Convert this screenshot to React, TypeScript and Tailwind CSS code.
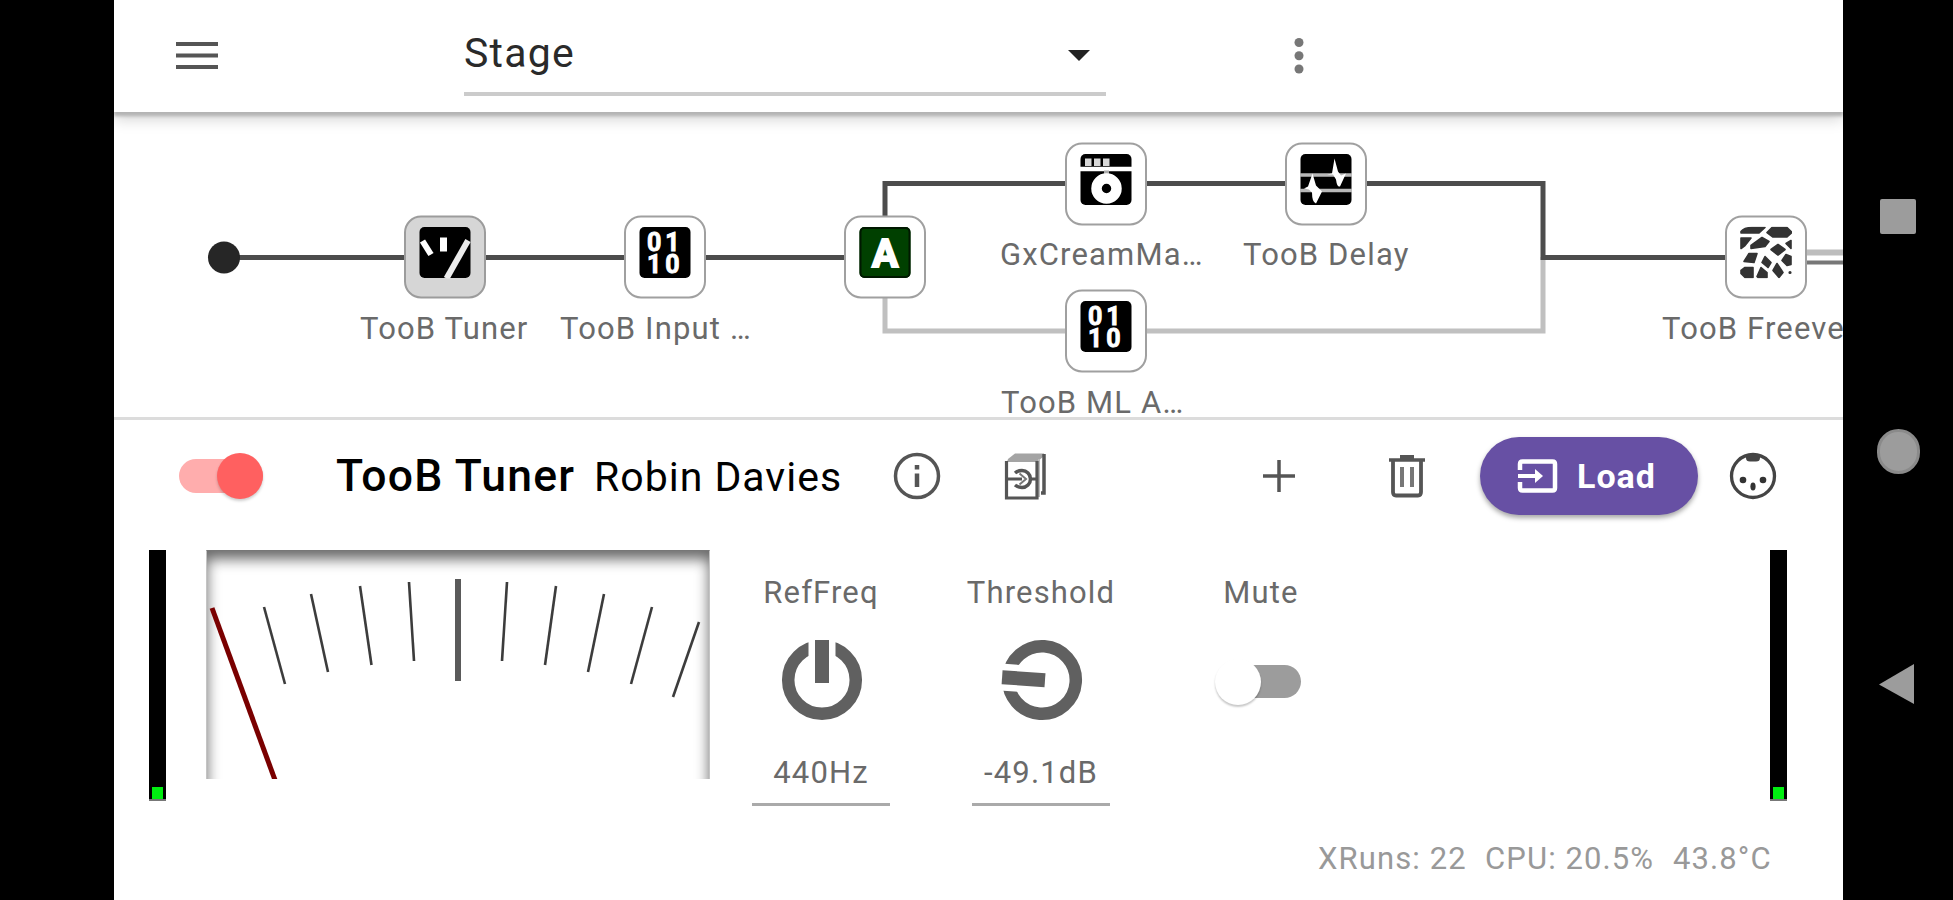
import React from 'react';

type NodeIcon = 'tuner' | 'binary' | 'split' | 'amp' | 'delay' | 'reverb';

interface PluginNode {
  id: string;
  icon: NodeIcon;
  label?: string;
  x: number;
  y: number;
  labelX?: number;
  selected?: boolean;
}

// x/y are the centre of each tile on the pedalboard canvas
const nodes: PluginNode[] = [
  { id: 'tuner', icon: 'tuner', label: 'TooB Tuner', x: 331, y: 145, labelX: 246, selected: true },
  { id: 'input', icon: 'binary', label: 'TooB Input …', x: 551, y: 145, labelX: 446 },
  { id: 'split', icon: 'split', x: 771, y: 145 },
  { id: 'cream', icon: 'amp', label: 'GxCreamMa…', x: 992, y: 71.5, labelX: 886 },
  { id: 'delay', icon: 'delay', label: 'TooB Delay', x: 1212, y: 71.5, labelX: 1129 },
  { id: 'ml', icon: 'binary', label: 'TooB ML A…', x: 992, y: 219, labelX: 887 },
  { id: 'freeverb', icon: 'reverb', label: 'TooB Freeverb', x: 1652, y: 145, labelX: 1548 },
];

const TileIcon: React.FC<{ icon: NodeIcon }> = ({ icon }) => {
  const base = icon === 'split' ? '#004000' : '#000';
  return (
    <svg width="52" height="52" viewBox="0 0 52 52" className="block">
      {icon !== 'reverb' && <rect x="0.5" y="0.5" width="51" height="51" rx="5" fill={base} />}
      {icon === 'split' && (
        <>
          <rect x="1.5" y="1.5" width="49" height="49" rx="4" fill="none" stroke="#001800" strokeWidth="2" />
          <text x="26" y="40" textAnchor="middle" fill="#fff" stroke="#fff" strokeWidth="2" className="font-['Roboto',sans-serif] text-[39px] font-bold">A</text>
        </>
      )}
      {icon === 'tuner' && (
        <g stroke="#fff" fill="none">
          <path d="M3.5 14.5 12 28" strokeWidth="6" />
          <path d="M24.5 11V25" strokeWidth="7" />
          <path d="M49 14 27.5 52" strokeWidth="6" stroke="#ececec" />
        </g>
      )}
      {icon === 'binary' && (
        <g fill="#fff" stroke="#fff" strokeWidth="0.9" className="font-['Roboto',sans-serif] text-[25px] font-bold tracking-[4px]">
          <text x="8" y="24">01</text>
          <text x="8" y="46.5">10</text>
        </g>
      )}
      {icon === 'amp' && (
        <g>
          <path d="M0 15.5H52" stroke="#fff" strokeWidth="4.5" />
          <rect x="5" y="5" width="6.5" height="7.5" fill="#d8d8d8" />
          <rect x="14" y="5" width="6.5" height="7.5" fill="#d8d8d8" />
          <rect x="23" y="5" width="6.5" height="7.5" fill="#d8d8d8" />
          <path d="M26.5 17V24" stroke="#aaa" strokeWidth="5" />
          <circle cx="26.5" cy="35" r="10" fill="none" stroke="#fff" strokeWidth="10.5" />
        </g>
      )}
      {icon === 'delay' && (
        <g>
          <path d="M0 21.5H52M0 37H52" stroke="#b8b8b8" strokeWidth="3.6" />
          <path d="M27 21 32 20 34.5 5 38 18 41 22 46 20 40 33Q37 34 36 26L33 21Z" fill="#fff" />
          <path d="M4 35 8 33 12.5 20 16 32 22 38 16 50Q12 49 12 39L9 36Z" fill="#fff" />
        </g>
      )}
      {icon === 'reverb' && (
        <g fill="#333" stroke="#333" strokeWidth="1.6" strokeLinejoin="round">
          <path d="M1 5Q4 1 12 1H25L19 6.5H1Z" />
          <path d="M27 6 32 1H47L52 6 47 10.5H33Z" />
          <path d="M1 11.5H11L5 19 1 22Z" />
          <path d="M11 19 22 11 29 15 25 20 11 22Z" />
          <path d="M46 17 51 14V22Z" />
          <path d="M31 23 38 18 45 23 38 28.5Z" />
          <path d="M4 35 9 27H17L14 36Z" />
          <path d="M22 36 25 30 31 36 28 41Z" />
          <path d="M42 34 46 28 51 30V38L47 39Z" />
          <path d="M1 44 5 41H13V51H5L1 47Z" />
          <path d="M17 50 21 41 27 46V51H18Z" />
          <path d="M33 44 37 37 43 46 39 51Z" />
          <circle cx="50" cy="46" r="0.8" />
        </g>
      )}
    </svg>
  );
};

const Tile: React.FC<{ node: PluginNode }> = ({ node }) => (
  <>
    <div
      className={`absolute flex h-[83px] w-[82px] -translate-x-1/2 -translate-y-1/2 justify-center rounded-[17px] border-[2.5px] pt-[9px] ${
        node.selected ? 'border-[#9c9c9c] bg-[#d6d6d6]' : 'border-[#a0a0a0] bg-white'
      }`}
      style={{ left: node.x, top: node.y }}
    >
      <TileIcon icon={node.icon} />
    </div>
    {node.label && (
      <span
        className="absolute text-[31px] leading-[36px] tracking-[1.15px] whitespace-nowrap text-[#6a6a6a]"
        style={{ left: node.labelX, top: node.y + 53.5 }}
      >
        {node.label}
      </span>
    )}
  </>
);

const Pedalboard: React.FC = () => (
  <section className="relative h-[305px] overflow-hidden">
    <svg width="1729" height="305" className="block" fill="none">
      <path d="M771 145V219H1429V145" stroke="#c0c0c0" strokeWidth="5" />
      <path d="M110 145.5H771V71.5H1429V145.5H1652" stroke="#4c4c4c" strokeWidth="5" />
      <path d="M1652 140.5H1729" stroke="#bdbdbd" strokeWidth="6" />
      <path d="M1652 150.5H1729" stroke="#777" strokeWidth="4" />
      <circle cx="110" cy="145.5" r="16" fill="#262626" />
    </svg>
    {nodes.map((node) => (
      <Tile key={node.id} node={node} />
    ))}
  </section>
);

const Header: React.FC = () => (
  <header className="relative z-10 flex h-[112px] bg-white shadow-[0_4px_3px_#b4b4b4,0_7px_14px_rgba(0,0,0,0.18)]">
    <svg width="42" height="29" className="mt-[41px] ml-[62px]" stroke="#555" strokeWidth="4">
      <path d="M0 3H42M0 14.5H42M0 26H42" />
    </svg>
    <div className="mt-[29px] ml-[246px] flex h-[67px] w-[642px] justify-between border-b-4 border-[#cbcbcb]">
      <span className="text-[41px] leading-[48px] tracking-[1.2px] text-[#2a2a2a]">Stage</span>
      <svg width="22" height="11" className="mt-[21px] mr-[16px]">
        <path d="M0 0H22L11 11Z" fill="#222" />
      </svg>
    </div>
    <svg width="10" height="38" className="mt-[37px] ml-[188px]" fill="#777">
      <circle cx="5" cy="5.5" r="4.5" />
      <circle cx="5" cy="18.7" r="4.5" />
      <circle cx="5" cy="32" r="4.5" />
    </svg>
  </header>
);

const PluginToolbar: React.FC = () => (
  <div className="flex h-[112px] items-center">
    <div className="ml-[65px] flex h-[34px] w-[84px] items-center justify-end rounded-full bg-[#ffadad]">
      <div className="h-[46px] w-[46px] shrink-0 rounded-full bg-[#ff6060] shadow-[0_2px_3px_rgba(0,0,0,0.2)]" />
    </div>
    <div className="ml-[73px] flex w-[540px] items-baseline whitespace-nowrap text-black">
      <span className="w-[258px] text-[44.5px] leading-[48px] font-medium tracking-[1.2px]">TooB Tuner</span>
      <span className="text-[41px] leading-[48px] tracking-[1px]">Robin Davies</span>
    </div>
    <svg width="48" height="48" viewBox="0 0 48 48" className="ml-[17px]" fill="none" stroke="#555">
      <circle cx="24" cy="24" r="21.5" strokeWidth="3.5" />
      <path d="M24 21.5V35M24 13V17.5" strokeWidth="4.5" />
    </svg>
    <svg width="44" height="50" viewBox="0 0 44 50" className="ml-[63px]" fill="none" stroke="#555">
      <path d="M4 8 11 2.5H40V5L33 11H3Z" fill="#a4a4a4" stroke="none" />
      <path d="M40 3V42H37" strokeWidth="3.5" />
      <path d="M35 8V46" strokeWidth="2" stroke="#bbb" />
      <path d="M2.5 10V47H33V10" strokeWidth="3.2" />
      <path d="M2 28H18M26 28H33" strokeWidth="3" />
      <path d="M11 22Q14 19.5 18 19.5A8.5 8.5 0 0 1 18 36.5Q14 36.5 11 34" strokeWidth="3.5" />
      <path d="M15.5 22.5 22 28 15.5 33.5" strokeWidth="2" stroke="#777" />
    </svg>
    <svg width="32" height="32" className="ml-[215px]" stroke="#555" strokeWidth="3.5">
      <path d="M0 16H32M16 0V32" />
    </svg>
    <svg width="38" height="44" viewBox="0 0 38 44" className="ml-[93px]" fill="none" stroke="#555">
      <path d="M1 6H37" strokeWidth="3.5" />
      <path d="M12 3H26" strokeWidth="4" />
      <path d="M5 6V38Q5 41.5 8 41.5H30Q33 41.5 33 38V6" strokeWidth="3.8" />
      <path d="M14 13V33M24 13V33" strokeWidth="4" stroke="#777" />
    </svg>
    <button className="ml-[54px] flex h-[78px] w-[218px] items-center rounded-full bg-[#6750a4] pl-[37px] shadow-[0_3px_5px_rgba(0,0,0,0.35)]">
      <svg width="41" height="36" viewBox="0 0 41 36" fill="none" stroke="#fff">
        <path d="M3 12V6Q3 3.5 5.5 3.5H35.5Q38 3.5 38 6V30Q38 32.5 35.5 32.5H5.5Q3 32.5 3 30V24" strokeWidth="4.5" />
        <path d="M1 18H21" strokeWidth="4" />
        <path d="M18 11 26 18 18 25Z" fill="#fff" stroke="none" />
      </svg>
      <span className="ml-[19px] text-[34px] leading-[40px] font-bold tracking-[1px] text-white">Load</span>
    </button>
    <svg width="48" height="48" viewBox="0 0 48 48" className="ml-[31px]" fill="none" stroke="#444">
      <circle cx="24" cy="24" r="21.5" strokeWidth="3.3" />
      <path d="M17 3H31V6Q31 9.5 27 9.5H21Q17 9.5 17 6Z" fill="#444" stroke="none" />
      <g fill="#333" stroke="none">
        <circle cx="14" cy="28" r="3.3" />
        <circle cx="34" cy="28" r="3.3" />
        <ellipse cx="24" cy="34.5" rx="2.6" ry="4" />
      </g>
    </svg>
  </div>
);

const LevelMeter: React.FC = () => (
  <div className="flex h-[251px] w-[17px] flex-col justify-end border-b-2 border-[#777] bg-black px-[3px]">
    <div className="h-[12px] bg-[#00ee10]" />
  </div>
);

// tick endpoints on the dial, left to right
const ticks = [
  [57, 56, 78, 133],
  [104, 43, 121, 121],
  [153, 35, 164.5, 114],
  [202, 31, 207, 110],
  [300, 31, 295, 110],
  [349, 35, 338, 114],
  [397, 43, 381, 121],
  [445, 56, 424, 133],
  [492, 71, 466, 146],
];

const TunerDial: React.FC = () => (
  <div className="ml-[40px] h-[229px] w-[504px] overflow-hidden">
    <div className="h-[260px] border border-[#c4c4c4] border-t-[#777] shadow-[inset_0_8px_14px_rgba(0,0,0,0.6)]">
      <svg width="502" height="229" fill="none" stroke="#3c3c3c" strokeWidth="2.6">
        {ticks.map(([x1, y1, x2, y2]) => (
          <line key={x1} x1={x1} y1={y1} x2={x2} y2={y2} />
        ))}
        <path d="M251 28V130" stroke="#5a5a5a" strokeWidth="6" />
        <path d="M5 57 68 229" stroke="#7a0000" strokeWidth="5" />
      </svg>
    </div>
  </div>
);

interface KnobProps {
  name: string;
  value: string;
  angle: number;
}

const Knob: React.FC<KnobProps> = ({ name, value, angle }) => (
  <div className="flex w-[220px] flex-col items-center text-[31px] leading-[36px] tracking-[1.15px] text-[#6a6a6a]">
    <span>{name}</span>
    <svg width="84" height="84" viewBox="-42 -42 84 84" className="mt-[27px] ml-px shrink-0">
      <g transform={`rotate(${angle})`} fill="none">
        <circle r="33.8" stroke="#606060" strokeWidth="12.5" />
        <path d="M0 -42V-18" stroke="#fff" strokeWidth="27" />
        <path d="M0 -40V3" stroke="#606060" strokeWidth="14" />
      </g>
    </svg>
    <span className="mt-[33px] h-[51px] w-[138px] shrink-0 border-b-[3px] border-[#aaa] text-center">{value}</span>
  </div>
);

const ControlPanel: React.FC = () => (
  <div className="flex h-[251px] pl-[35px]">
    <LevelMeter />
    <TunerDial />
    <div className="flex pt-[25px] pl-px">
      <Knob name="RefFreq" value="440Hz" angle={0} />
      <Knob name="Threshold" value="-49.1dB" angle={-86} />
      <div className="flex w-[220px] flex-col items-center text-[31px] leading-[36px] tracking-[1.15px] text-[#6a6a6a]">
        <span>Mute</span>
        <div className="mt-[54px] ml-[2px] flex h-[33px] w-[78px] items-center rounded-full bg-[#9c9c9c]">
          <div className="-ml-[8px] h-[46px] w-[46px] shrink-0 rounded-full bg-white shadow-[0_2px_2px_rgba(0,0,0,0.22)]" />
        </div>
      </div>
    </div>
    <div className="mr-[56px] ml-auto">
      <LevelMeter />
    </div>
  </div>
);

const StatusBar: React.FC = () => (
  <footer className="mt-[40px] flex justify-end pr-[71px] text-[31px] leading-[36px] tracking-[1.1px] whitespace-nowrap text-[#999]">
    <span className="w-[167px]">XRuns: 22</span>
    <span className="w-[188px]">CPU: 20.5%</span>
    <span className="w-[99px]">43.8°C</span>
  </footer>
);

const NavigationBar: React.FC = () => (
  <nav className="flex w-[110px] flex-col items-center bg-black pt-[199px]">
    <div className="h-[35px] w-[36px] rounded-[2px] bg-[#9c9c9c]" />
    <div className="mt-[195px] flex h-[45px] w-[43px] items-center justify-center rounded-full border-[3px] border-[#8a8a8a] bg-[#9c9c9c]" />
    <svg width="35" height="40" className="mt-[190px] mr-[3px]">
      <path d="M35 0V40L0 20.5Z" fill="#9c9c9c" />
    </svg>
  </nav>
);

const App: React.FC = () => {
  return (
    <div className="flex h-[900px] w-[1953px] overflow-hidden bg-black font-['Roboto',sans-serif]">
      <main className="ml-[114px] w-[1729px] overflow-hidden bg-white">
        <Header />
        <Pedalboard />
        <div className="h-[3px] bg-[#dcdcdc]" />
        <PluginToolbar />
        <div className="h-[18px]" />
        <ControlPanel />
        <StatusBar />
      </main>
      <NavigationBar />
    </div>
  );
};

export default App;
